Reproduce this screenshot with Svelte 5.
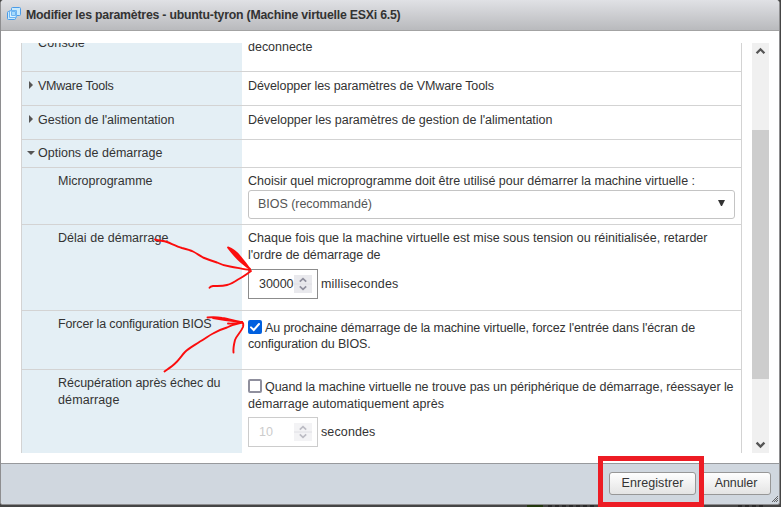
<script>
  let delay = $state('30000');
  let retry = $state('10');

  // Spreads the letters of a line evenly over a given width.
  function fit(node, width) {
    node.style.letterSpacing = '0px';
    const natural = node.getBoundingClientRect().width;
    const count = node.textContent.length;
    node.style.letterSpacing = `${(width - natural) / count}px`;
  }
</script>

{#snippet line(text, width)}<span class="line" use:fit={width}>{text}</span>{/snippet}

{#snippet spinner()}
  <svg class="spin" width="18" height="18" viewBox="0 0 18 18">
    <rect width="18" height="18" />
    <path d="M0 9H18" class="split" />
    <path d="M5.800 6.600 9 3.600l3.200 3M5.800 11.400 9 14.400l3.200-3" class="chev" />
  </svg>
{/snippet}

<div class="page">
  <section class="dialog">
    <header>
      <svg width="14" height="14" viewBox="0 0 14 14">
        <g fill="#c9e9fc" stroke="#4a9be8">
          <rect x="4.5" y=".5" width="9" height="8" rx="1" />
          <rect x=".5" y="4.5" width="8" height="8" rx="1" />
          <path d="M2.5 3.5h7v7h-7z" fill="#e4f5ff" fill-opacity=".7" stroke="#6db4f2" />
          <path d="M4.5 4.5h4v4h-4z" fill="#a7dafb" stroke="#6db4f2" />
        </g>
      </svg>
      <h1>{@render line('Modifier les paramètres - ubuntu-tyron (Machine virtuelle ESXi 6.5)', 374.5)}</h1>
    </header>

    <main>
      <div class="grid">
        <div class="row r0">
          <div class="label top">{@render line('Console', 47)}</div>
          <div class="value">{@render line('deconnecte', 64.5)}</div>
        </div>
        <div class="row r1">
          <div class="label top"><i class="right"></i>{@render line('VMware Tools', 75.5)}</div>
          <div class="value">{@render line('Développer les paramètres de VMware Tools', 246)}</div>
        </div>
        <div class="row r1">
          <div class="label top"><i class="right"></i>{@render line("Gestion de l'alimentation", 136.5)}</div>
          <div class="value">{@render line("Développer les paramètres de gestion de l'alimentation", 304.5)}</div>
        </div>
        <div class="row r3">
          <div class="label top"><i class="down"></i>{@render line('Options de démarrage', 124.5)}</div>
          <div class="value"></div>
        </div>
        <div class="row r4">
          <div class="label">{@render line('Microprogramme', 94.5)}</div>
          <div class="value">
            {@render line('Choisir quel microprogramme doit être utilisé pour démarrer la machine virtuelle :', 447)}
            <div class="select">
              {@render line('BIOS (recommandé)', 114)}
              <svg width="7" height="6" viewBox="0 0 7 6"><path d="M0 0h7L4 6H3z" fill="#333" /></svg>
            </div>
          </div>
        </div>
        <div class="row r5">
          <div class="label">{@render line('Délai de démarrage', 110.5)}</div>
          <div class="value">
            {@render line('Chaque fois que la machine virtuelle est mise sous tension ou réinitialisée, retarder', 459.5)}
            {@render line("l'ordre de démarrage de", 132.5)}
            <div class="entry">
              <div class="num">{@render line(delay, 34.5)}{@render spinner()}</div>
              {@render line('millisecondes', 77.5)}
            </div>
          </div>
        </div>
        <div class="row r6">
          <div class="label">{@render line('Forcer la configuration BIOS', 153.5)}</div>
          <div class="value check">
            <div class="opt">
              <span class="box on"><svg width="14" height="14" viewBox="0 0 14 14"><path d="M3 7.4 5.7 10 11 4" /></svg></span>
              {@render line("Au prochaine démarrage de la machine virtuelle, forcez l'entrée dans l'écran de", 430)}
            </div>
            {@render line('configuration du BIOS.', 122.5)}
          </div>
        </div>
        <div class="row r7">
          <div class="label">
            {@render line('Récupération après échec du', 162.5)}
            {@render line('démarrage', 61.5)}
          </div>
          <div class="value check">
            <div class="opt">
              <span class="box"></span>
              {@render line('Quand la machine virtuelle ne trouve pas un périphérique de démarrage, réessayer le', 468.5)}
            </div>
            {@render line('démarrage automatiquement après', 196)}
            <div class="entry">
              <div class="num off">{@render line(retry, 14)}{@render spinner()}</div>
              {@render line('secondes', 54.5)}
            </div>
          </div>
        </div>
      </div>
      <div class="scroll">
        <svg width="17" height="17" viewBox="0 0 17 17"><path d="M4.600 10.300 8.500 6.300l3.900 4" /></svg>
        <div class="thumb"></div>
        <svg width="17" height="17" viewBox="0 0 17 17"><path d="M4.600 6.600 8.500 10.600l3.900-4" /></svg>
      </div>
    </main>

    <footer>
      <button class="save">{@render line('Enregistrer', 62)}</button>
      <button class="cancel">{@render line('Annuler', 42.5)}</button>
      <svg class="grip" width="6" height="6" viewBox="0 0 6 6"><path d="M0 6 6 0M2 6 6 2M4 6 6 4" /></svg>
    </footer>
  </section>

  <div class="behind"><b class="green"></b><b class="dots"></b><b class="dots short"></b></div>

  <svg class="marks" width="781" height="507" viewBox="0 0 781 507">
    <g fill="none" stroke="#fb0d0d" stroke-width="1.9" stroke-linecap="round" stroke-linejoin="round">
      <path d="M155 239.500C160 241 163 240.500 167 242C172 244 177 246.500 182 248C186 249 190 250 193 251.500C197 253.500 200 256 203 257.500C208 259.500 212 261 217 262.500C221 264.500 226 266 230 266.500C237 267.500 244 269.500 250 270" />
      <path d="M250 269.500C247 265 243 260 240 256.500C237 253 232 249 228 247.500C231 251.500 234 255 238 259C242 263 246 266 250 269C244 263 238 255 232 251" />
      <path d="M251 271C247 274 243 277 238 279.500C235 281.500 231 284 227 285C222 286.500 217 286 213 286C211 286.300 210 287 209.500 287.700" />
      <path d="M164.500 371.500C168 369 172 366.500 175 363.500C179 360 182 355 185 352C189 348 195 345 200 341.500C205 339 208 336 213 333.500C217 331 222 329 227 327.500C232 325 237 323.500 242 322.500" />
      <path d="M207.500 317.500C212 317 217 317 222 318C229 319 236 321.500 242 322.300C236 323.500 232 324 228 323.500M242 322C231 321 221 319.500 213 318" />
      <path d="M242 322C243.500 323 243.500 325 243 327C241 332 237 335 235 340C234 344 233 348 233.500 352.500" />
    </g>
    <rect x="600.5" y="458.500" width="101" height="46" fill="none" stroke="#ed1c24" stroke-width="5" />
  </svg>
</div>

<style>
  :global(body) { margin: 0; }
  .page {
    position: relative;
    width: 781px;
    height: 507px;
    overflow: hidden;
    background: #454545;
    font: 12.5px/17px "Liberation Sans", Arial, sans-serif;
    color: #333;
  }
  .dialog {
    box-sizing: border-box;
    width: 780px;
    height: 505px;
    display: flex;
    flex-direction: column;
    background: #fff;
    border: solid #8e8e90;
    border-width: 0 1px 1px;
    border-radius: 4px 4px 3px 3px;
    overflow: hidden;
  }
  header {
    box-sizing: border-box;
    height: 31px;
    display: flex;
    gap: 5px;
    padding: 7px 0 0 6px;
    background: linear-gradient(#e0e1e5, #b9babd);
    border-bottom: 1px solid #a3a3a3;
  }
  h1 { margin: 0; font-size: 12.3px; line-height: 17px; }
  .line { display: block; width: max-content; white-space: pre; }
  main {
    flex: 1;
    display: flex;
    justify-content: space-between;
    padding: 12px 10px 10px 20px;
  }
  .grid {
    box-sizing: border-box;
    width: 721px;
    height: 410px;
    overflow: hidden;
    border: solid #d3d3d3;
    border-width: 0 1px;
  }
  .row {
    box-sizing: border-box;
    display: flex;
    border-bottom: 1px solid #d3d3d3;
  }
  .label {
    box-sizing: border-box;
    width: 220px;
    padding: 5px 0 0 36px;
    background: #e4eff5;
  }
  .label.top { display: flex; padding-left: 7px; }
  .value { padding: 5px 0 0 6px; }
  .r0 { height: 29px; }
  .row.r0 .label { padding-left: 16px; }
  .r0 .line { margin-top: -13px; }
  .r0 .value .line { margin-top: -9px; }
  .r1 { height: 34px; }
  .r1 .label, .r1 .value { padding-top: 6px; }
  .r3 { height: 28px; }
  .r4 { height: 57px; }
  .r5 { height: 86px; }
  .r6 { height: 59px; }
  .r7 { height: 83px; border-bottom: 0; }
  i { flex: none; width: 0; height: 0; }
  .right {
    margin: 3px 5px 0 0;
    border: solid transparent;
    border-width: 4px 0 4px 4px;
    border-left-color: #555;
  }
  .down {
    margin: 6px 3px 0 -2px;
    border: solid transparent;
    border-width: 4px 4px 0;
    border-top-color: #555;
  }
  .select {
    box-sizing: border-box;
    width: 487px;
    height: 29px;
    padding: 5px 9px 0;
    display: flex;
    justify-content: space-between;
    border: 1px solid #c4c4c4;
    border-radius: 3px;
    color: #555;
  }
  .select svg { margin-top: 4px; }
  .entry { display: flex; align-items: center; gap: 3px; margin-top: 5px; }
  .num {
    box-sizing: border-box;
    width: 70px;
    height: 30px;
    display: flex;
    align-items: center;
    justify-content: space-between;
    padding: 0 5px 0 10px;
    border: 1px solid #8c8c8c;
  }
  .spin rect { fill: #e9e9ed; }
  .spin .split { stroke: #e0e0e5; }
  .spin .chev { fill: none; stroke: #8f8f9d; stroke-width: 1.7; }
  .off { border-color: #ccc; color: #ccc; }
  .off .spin rect { fill: #f3f3f5; }
  .off .spin .chev { stroke: #bcbcc4; }
  .check { padding-top: 9px; }
  .check .entry { margin-top: 4px; }
  .r6 .opt { height: 16px; }
  .opt { display: flex; gap: 3px; }
  .box {
    box-sizing: border-box;
    width: 14px;
    height: 14px;
    border: 2px solid #8f8f9d;
    border-radius: 2px;
  }
  .box.on { border: 0; background: #0060df; }
  .box svg { display: block; }
  .box path { fill: none; stroke: #fff; stroke-width: 2; stroke-linecap: round; }
  .scroll {
    width: 17px;
    height: 410px;
    display: flex;
    flex-direction: column;
    justify-content: space-between;
    background: #f0f0f0;
  }
  .scroll path { fill: none; stroke: #555; stroke-width: 2.3; }
  .thumb { height: 249px; margin-bottom: -13px; background: #cdcdcd; }
  footer {
    box-sizing: border-box;
    height: 41px;
    display: flex;
    justify-content: flex-end;
    align-items: flex-start;
    gap: 5px;
    padding: 8px 1px 0 0;
    background: #d0d7df;
    border-top: 1px solid #97999c;
  }
  button {
    box-sizing: border-box;
    height: 23px;
    display: flex;
    justify-content: center;
    align-items: center;
    padding: 0 0 1px;
    border: 1px solid #979797;
    border-radius: 3px;
    background: linear-gradient(#fefefe, #e4e4e4);
    font: inherit;
    color: #333;
  }
  .save { width: 87px; }
  .cancel { width: 70px; }
  .grip { margin: 24px 0 0 -4px; }
  .grip path { stroke: #444; stroke-width: .8; }
  .behind { display: flex; height: 2px; padding-left: 527px; }
  .green { width: 16px; background: #23380f; margin-right: 5px; }
  .dots { width: 46px; background: repeating-linear-gradient(90deg, #2a2a2a 0 4px, #454545 4px 7px); }
  .short { width: 26px; margin-left: 144px; }
  .marks { position: absolute; left: 0; top: 0; pointer-events: none; }
</style>
